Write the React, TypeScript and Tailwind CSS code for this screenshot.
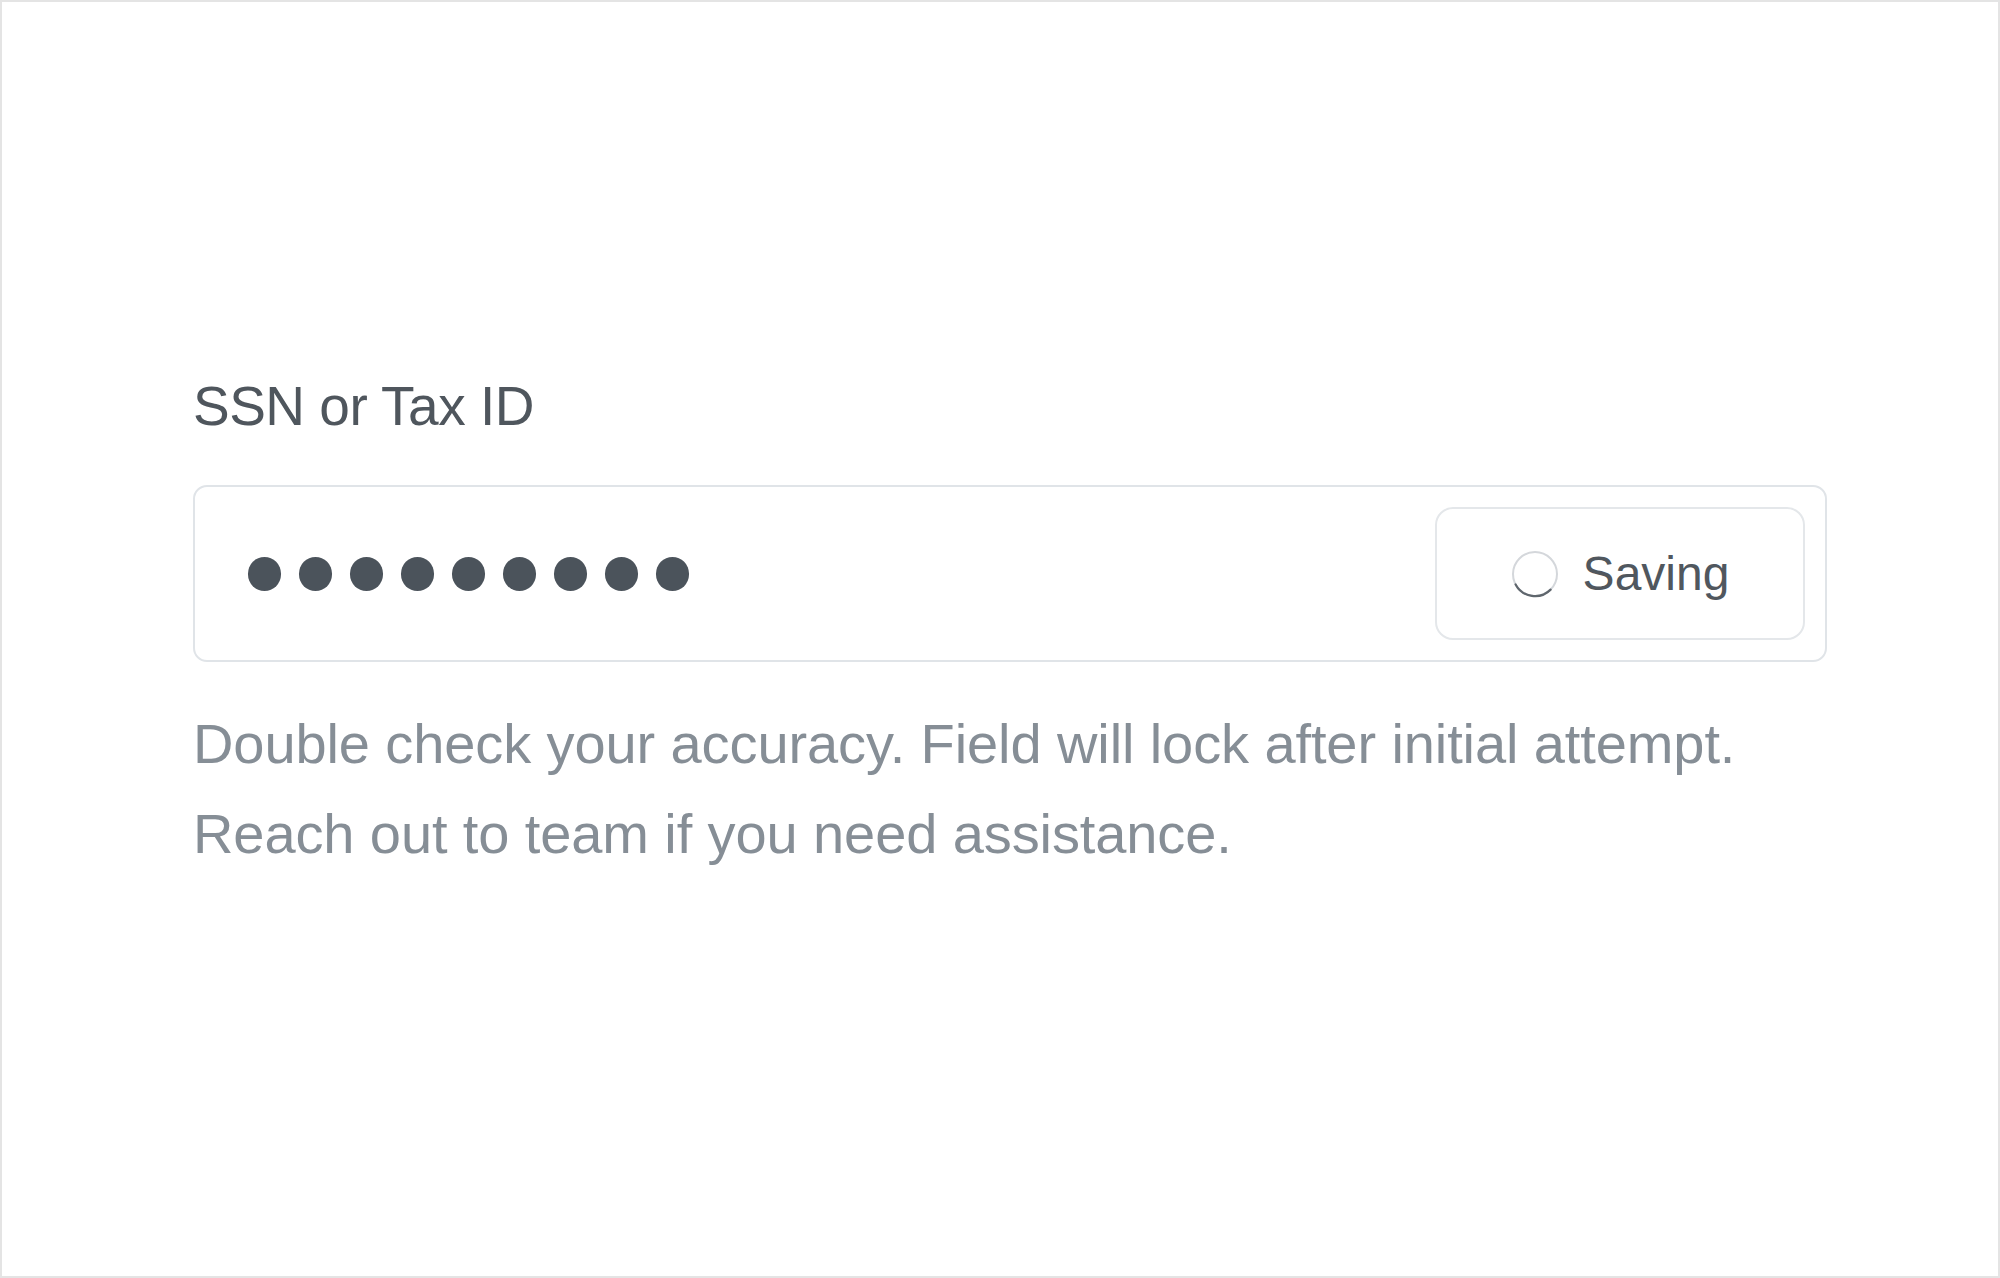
const dots = [0, 1, 2, 3, 4, 5, 6, 7, 8];

function Spinner() {
  return (
    <svg width="48" height="48" viewBox="0 0 48 48" fill="none">
      <circle cx="24" cy="24" r="22" stroke="#d4d7db" strokeWidth="2" />
      <path
        d="M 39.6 39.6 A 22 22 0 0 1 4.6 34.4"
        stroke="#5f666d"
        strokeWidth="2.2"
        strokeLinecap="round"
      />
    </svg>
  );
}

export default function App() {
  return (
    <div
      className="w-[2000px] h-[1278px] bg-white border-2 border-[#e4e4e4] pl-[191px] pt-[372px]"
      style={{ fontFamily: '"Liberation Sans", Arial, sans-serif' }}
    >
      <label className="block text-[55px] leading-[64px] tracking-[-0.5px] text-[#4f565d]">
        SSN or Tax ID
      </label>

      <div className="mt-[47px] w-[1634px] h-[177px] border-2 border-[#e0e4e8] rounded-[14px] flex items-center justify-between pl-[53px] pr-[20px]">
        <div className="flex items-center gap-[18px]">
          {dots.map((d) => (
            <div key={d} className="w-[33px] h-[34px] shrink-0 rounded-full bg-[#4b535b]" />
          ))}
        </div>

        <div className="w-[370px] h-[133px] border-2 border-[#e4e7ea] rounded-[18px] flex items-center justify-center gap-[24px]">
          <Spinner />
          <span className="text-[48px] leading-none text-[#50575e]">Saving</span>
        </div>
      </div>

      <p className="mt-[37px] text-[56px] leading-[90px] tracking-[-0.1px] text-[#868e96]">
        Double check your accuracy. Field will lock after initial attempt.
        <br />
        Reach out to team if you need assistance.
      </p>
    </div>
  );
}
